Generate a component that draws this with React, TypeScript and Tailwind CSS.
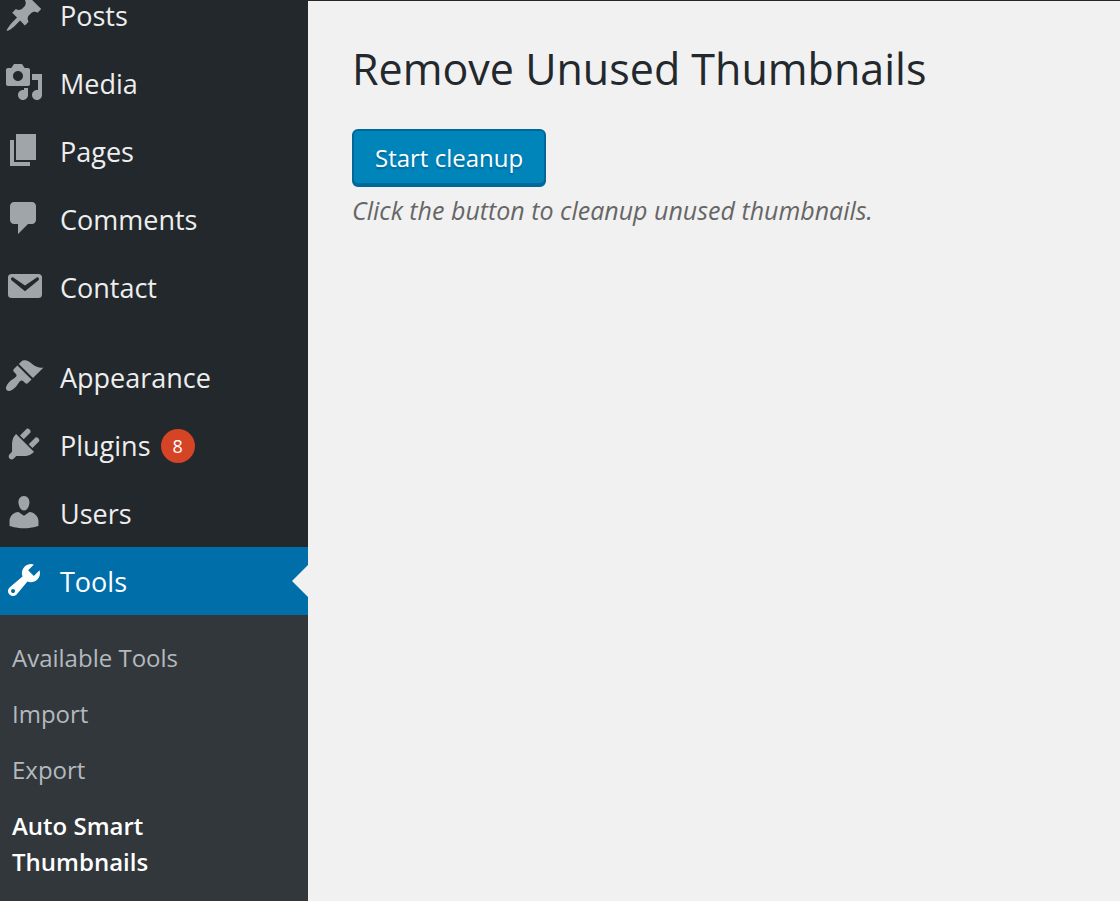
type Item = { label: string; icon: string; badge?: number; active?: boolean };

const content: Item[] = [
  {
    label: "Posts",
    icon: "M10.44 3.02l1.82-1.82 6.36 6.35-1.83 1.82c-1.05-.68-2.48-.57-3.41.36l-.75.75c-.92.93-1.04 2.35-.35 3.41l-1.83 1.82-2.41-2.41-2.8 2.79c-.42.42-3.38 2.71-3.8 2.29s1.86-3.39 2.28-3.81l2.79-2.79L4.1 9.36l1.83-1.82c1.05.69 2.48.57 3.4-.36l.75-.75c.93-.92 1.05-2.35.36-3.41z",
  },
  {
    label: "Media",
    icon: "M13 11V4c0-.55-.45-1-1-1h-1.67L9 1H5L3.67 3H2c-.55 0-1 .45-1 1v7c0 .55.45 1 1 1h10c.55 0 1-.45 1-1zM7 4.5c1.38 0 2.5 1.12 2.5 2.5S8.38 9.5 7 9.5 4.5 8.38 4.5 7 5.62 4.5 7 4.5zM14 6h5v10.5c0 1.38-1.12 2.5-2.5 2.5S14 17.88 14 16.5s1.12-2.5 2.5-2.5c.17 0 .34.02.5.05V9h-3V6zm-4 8.05V13h2v3.5c0 1.38-1.12 2.5-2.5 2.5S7 17.88 7 16.5 8.12 14 9.5 14c.17 0 .34.02.5.05z",
  },
  { label: "Pages", icon: "M6 15V2h10v13H6zm-1 1h8v2H3V5h2v11z" },
  {
    label: "Comments",
    icon: "M5 2h9c1.1 0 2 .9 2 2v7c0 1.1-.9 2-2 2h-2l-5 5v-5H5c-1.1 0-2-.9-2-2V4c0-1.1.9-2 2-2z",
  },
  {
    label: "Contact",
    icon: "M3.87 4h13.25C18.37 4 19 4.59 19 5.79v8.42c0 1.19-.63 1.79-1.88 1.79H3.87c-1.25 0-1.88-.6-1.88-1.79V5.79c0-1.2.63-1.79 1.88-1.79zm6.62 8.6l6.74-5.53c.24-.2.43-.66.13-1.07-.29-.41-.82-.42-1.17-.17l-5.7 3.86L4.8 5.83c-.35-.25-.88-.24-1.17.17-.3.41-.11.87.13 1.07z",
  },
];

const admin: Item[] = [
  {
    label: "Appearance",
    icon: "M14.48 11.06L7.41 3.99l1.5-1.5c.5-.56 2.3-.47 3.51.32 1.21.8 1.43 1.28 2.91 2.1 1.18.64 2.45 1.26 4.45.85zm-.71.71L6.7 4.7 4.93 6.47c-.39.39-.39 1.02 0 1.41l1.06 1.06c.39.39.39 1.03 0 1.42-.6.6-1.43 1.11-2.21 1.69-.35.26-.7.53-1.01.84C1.43 14.23.4 16.08 1.4 17.07c.99 1 2.84-.03 4.18-1.36.31-.31.58-.66.85-1.02.57-.78 1.08-1.61 1.69-2.21.39-.39 1.02-.39 1.41 0l1.06 1.06c.39.39 1.02.39 1.41 0z",
  },
  {
    label: "Plugins",
    badge: 8,
    icon: "M13.11 4.36L9.87 7.6 8 5.73l3.24-3.24c.35-.34 1.05-.2 1.56.32.52.51.66 1.21.31 1.55zm-8 1.77l.91-1.12 9.01 9.01-1.19.84c-.71.71-2.63 1.16-3.82 1.16H6.14L4.9 17.26c-.59.59-1.54.59-2.12 0-.59-.58-.59-1.53 0-2.12l1.24-1.24v-3.88c0-1.13.4-3.19 1.09-3.89zm7.26 3.97l3.24-3.24c.34-.35 1.04-.21 1.55.31.52.51.66 1.21.31 1.55l-3.24 3.25z",
  },
  {
    label: "Users",
    icon: "M10 9.25c-2.27 0-2.73-3.44-2.73-3.44C7 4.02 7.82 2 9.97 2c2.16 0 2.98 2.02 2.71 3.81 0 0-.41 3.44-2.68 3.44zm0 2.57L12.72 10c2.39 0 4.52 2.33 4.52 4.53v2.49s-3.65 1.13-7.24 1.13c-3.65 0-7.24-1.13-7.24-1.13v-2.49c0-2.25 1.94-4.48 4.47-4.48z",
  },
  {
    label: "Tools",
    active: true,
    icon: "M16.68 9.77c-1.34 1.34-3.3 1.67-4.95.99l-5.41 6.52c-.99.99-2.59.99-3.58 0s-.99-2.59 0-3.57l6.52-5.42c-.68-1.65-.35-3.61.99-4.95 1.28-1.28 3.12-1.62 4.72-1.06l-2.89 2.89 2.82 2.82 2.86-2.87c.53 1.58.18 3.39-1.08 4.65zM3.81 16.21c.4.39 1.04.39 1.43 0 .4-.4.4-1.04 0-1.43-.39-.4-1.03-.4-1.43 0-.39.39-.39 1.03 0 1.43z",
  },
];

const tools = ["Available Tools", "Import", "Export"];

function MenuItem({ label, icon, badge, active }: Item) {
  return (
    <li>
      <a
        href="#"
        aria-current={active ? "true" : undefined}
        className={`relative flex h-[68px] items-center pt-0.5 pl-1 text-[27px] leading-7 ${
          active ? "bg-[#006ea8] text-white" : "text-[#eeeeee]"
        }`}
      >
        <svg
          viewBox="0 0 20 20"
          aria-hidden="true"
          className={`mb-1 size-10 shrink-0 ${active ? "fill-white" : "fill-[#a0a5aa]"}`}
        >
          <path fillRule="evenodd" d={icon} />
        </svg>
        <span className="ml-4">{label}</span>
        {badge !== undefined && (
          <span className="ml-2.5 flex size-[34px] items-center justify-center rounded-full bg-[#d54424] text-lg text-white">
            {badge}
          </span>
        )}
        {active && (
          <span className="absolute top-[18px] right-0 size-0 border-y-16 border-r-16 border-y-transparent border-r-[#f1f1f1]" />
        )}
      </a>
    </li>
  );
}

export default function App() {
  return (
    <div className="flex min-h-screen overflow-hidden bg-[#f1f1f1] font-['Open_Sans','Noto_Sans',sans-serif]">
      <nav aria-label="Main menu" className="-mt-[19px] w-[308px] shrink-0 bg-[#23282d]">
        <ul>
          {content.map((item) => (
            <MenuItem key={item.label} {...item} />
          ))}
        </ul>
        <ul className="mt-[22px]">
          {admin.map((item) => (
            <MenuItem key={item.label} {...item} />
          ))}
        </ul>
        <ul className="bg-[#32373c] pt-[15px] pb-[11px] text-2xl leading-9 text-[#b4b9be]">
          {tools.map((label) => (
            <li key={label}>
              <a href="#" className="block px-3 py-2.5 leading-9">
                {label}
              </a>
            </li>
          ))}
          <li>
            <a href="#" aria-current="page" className="block px-3 py-2.5 leading-9 font-semibold text-white">
              Auto Smart
              <br />
              Thumbnails
            </a>
          </li>
        </ul>
      </nav>
      <main className="min-w-0 flex-1 border-t border-[#23282d] px-11 pt-9">
        <h1 className="text-[43px] leading-16 font-normal text-[#23282d]">Remove Unused Thumbnails</h1>
        <button
          type="button"
          className="mt-7 block h-[58px] rounded-md border-2 border-[#006799] bg-[#0085ba] px-[21px] text-2xl text-white shadow-[inset_0_-2px_0_#006799] text-shadow-[0_2px_2px_#006799]"
        >
          Start cleanup
        </button>
        <p className="mt-[5px] text-[25px] leading-9 text-[#666666] italic">
          Click the button to cleanup unused thumbnails.
        </p>
      </main>
    </div>
  );
}
